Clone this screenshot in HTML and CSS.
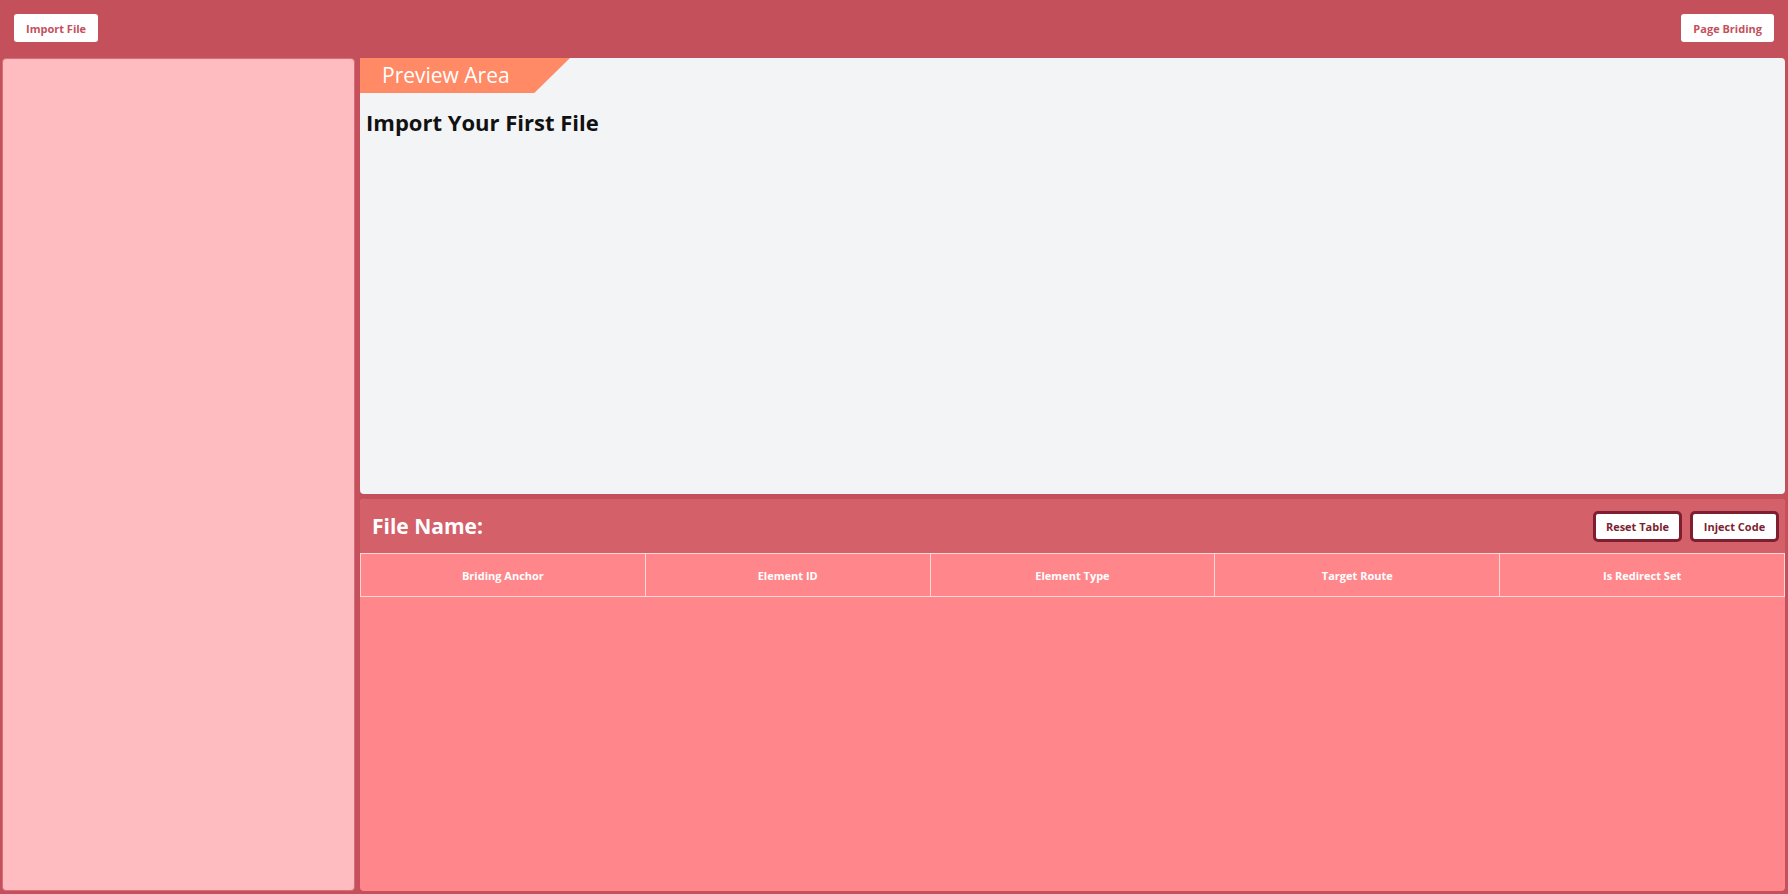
FILE: index.html
```html
<!DOCTYPE html>
<html>
<head>
<meta charset="utf-8">
<link rel="stylesheet" href="styles.css">
</head>
<body>
<header class="topbar">
  <button class="top-btn">Import File</button>
  <button class="top-btn">Page Briding</button>
</header>
<main class="layout">
  <aside class="sidebar"></aside>
  <section class="content">
    <div class="preview">
      <div class="preview-tab">Preview Area</div>
      <h2 class="preview-title">Import Your First File</h2>
    </div>
    <div class="table-panel">
      <div class="table-head">
        <h2 class="file-name">File Name:</h2>
        <div class="actions">
          <button class="act-btn">Reset Table</button>
          <button class="act-btn">Inject Code</button>
        </div>
      </div>
      <table class="bridge-table">
        <thead>
          <tr>
            <th>Briding Anchor</th>
            <th>Element ID</th>
            <th>Element Type</th>
            <th>Target Route</th>
            <th>Is Redirect Set</th>
          </tr>
        </thead>
      </table>
    </div>
  </section>
</main>
</body>
</html>
```
FILE: styles.css
```css
* { box-sizing: border-box; }
html, body { height: 100%; }
body {
  margin: 0;
  background: #c4505c;
  font-family: "Open Sans", "Noto Sans", sans-serif;
  display: flex;
  flex-direction: column;
  overflow: hidden;
}
.topbar {
  height: 58px;
  flex: none;
  display: flex;
  justify-content: space-between;
  align-items: flex-start;
  padding: 14px 14px 0 14px;
}
.top-btn {
  height: 28px;
  padding: 0 12px;
  border: none;
  border-radius: 3px;
  background: #ffffff;
  color: #c4505c;
  font-family: inherit;
  font-weight: 700;
  font-size: 11px;
}
.layout {
  flex: 1;
  min-height: 0;
  display: grid;
  grid-template-columns: 353px 1fr;
  gap: 5px;
  padding: 0 3px 3px 2px;
}
.sidebar {
  background: #ffbcc0;
  border-radius: 4px;
  border: 1px solid #d66c75;
}
.content {
  display: flex;
  flex-direction: column;
  gap: 5px;
  min-height: 0;
}
.preview {
  height: 436px;
  flex: none;
  background: #f3f4f6;
  border-radius: 0 4px 4px 4px;
  padding: 0;
}
.preview-tab {
  width: 210px;
  height: 35px;
  background: #ff8a65;
  color: #ffffff;
  font-size: 21px;
  line-height: 35px;
  padding-left: 22px;
  clip-path: polygon(0 0, 100% 0, 83% 100%, 0 100%);
}
.preview-title {
  margin: 14px 0 0 6px;
  font-size: 22px;
  font-weight: 700;
  color: #111111;
}
.table-panel {
  flex: 1;
  min-height: 0;
  background: #ff878c;
  border-radius: 4px;
  overflow: hidden;
}
.table-head {
  height: 54px;
  background: #d4606a;
  display: flex;
  align-items: center;
  justify-content: space-between;
  padding: 0 6px 0 12px;
}
.file-name {
  margin: 0;
  color: #ffffff;
  font-size: 21px;
  font-weight: 700;
}
.actions {
  display: flex;
  gap: 8px;
}
.act-btn {
  height: 31px;
  width: 89px;
  background: #ffffff;
  border: 3px solid #7d1f30;
  border-radius: 5px;
  color: #7d1f30;
  font-family: inherit;
  font-weight: 700;
  font-size: 11px;
  padding: 0;
}
.bridge-table {
  width: 100%;
  border-collapse: collapse;
  table-layout: fixed;
}
.bridge-table th {
  height: 43px;
  border: 1px solid #ffd7d9;
  color: #ffffff;
  font-size: 11px;
  font-weight: 700;
  text-align: center;
}
```
